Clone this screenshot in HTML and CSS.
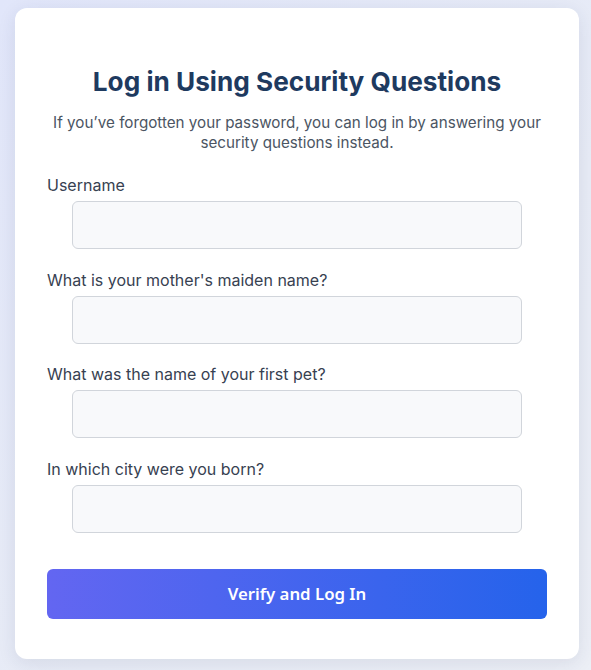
FILE: index.html
```html
<!DOCTYPE html>
<html lang="en">
<head>
<meta charset="utf-8">
<title>Log in Using Security Questions</title>
<link rel="stylesheet" href="styles.css">
</head>
<body>
<main class="card">
  <h1 class="title">Log in Using Security Questions</h1>
  <p class="subtitle">If you’ve forgotten your password, you can log in by answering your security questions instead.</p>
  <form class="form">
    <div class="field">
      <label class="label" for="username">Username</label>
      <input class="input" id="username" type="text">
    </div>
    <div class="field">
      <label class="label" for="q1">What is your mother's maiden name?</label>
      <input class="input" id="q1" type="text">
    </div>
    <div class="field">
      <label class="label" for="q2">What was the name of your first pet?</label>
      <input class="input" id="q2" type="text">
    </div>
    <div class="field">
      <label class="label" for="q3">In which city were you born?</label>
      <input class="input" id="q3" type="text">
    </div>
    <button class="button" type="button">Verify and Log In</button>
  </form>
</main>
</body>
</html>
```

FILE: styles.css
```css
* { box-sizing: border-box; }

html, body { height: 100%; }

body {
  margin: 0;
  padding: 8px 12px 0 15px;
  font-family: Inter, "Noto Sans", sans-serif;
  background: linear-gradient(135deg, #e1e6fa 0%, #e8ecf6 60%, #eceff6 100%);
  overflow: hidden;
}

.card {
  width: 564px;
  background: #ffffff;
  border-radius: 12px;
  padding: 40px 32px 40px;
  box-shadow: 0 4px 18px rgba(40, 50, 90, 0.10);
}

.title {
  margin: 18.4px 0 15.6px;
  font-size: 26.2px;
  font-weight: 700;
  line-height: 31.5px;
  color: #1e3a5f;
  text-align: center;
}

.subtitle {
  margin: 0 0 20.4px;
  font-size: 15.2px;
  line-height: 19.5px;
  color: #4b5563;
  text-align: center;
}

.form {
  display: flex;
  flex-direction: column;
}

.field {
  display: flex;
  flex-direction: column;
  margin-bottom: 18.67px;
}

.label {
  font-size: 16px;
  line-height: 24px;
  color: #374151;
  margin-bottom: 4px;
}

.input {
  display: block;
  width: 90%;
  height: 48px;
  margin: 0 auto;
  background: #f8f9fb;
  border: 1px solid #d1d5db;
  border-radius: 6px;
  font: inherit;
}

.button {
  margin-top: 17px;
  height: 50px;
  width: 100%;
  border: 0;
  border-radius: 6px;
  background: linear-gradient(90deg, #6366f1 0%, #2563eb 100%);
  color: #ffffff;
  font-family: "Noto Sans", sans-serif;
  font-size: 16.8px;
  font-weight: 600;
}
```
